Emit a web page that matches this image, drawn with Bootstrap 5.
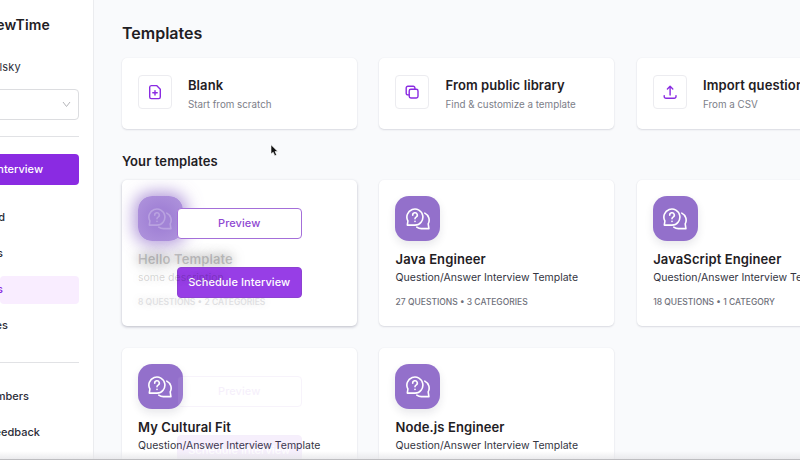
<!DOCTYPE html>
<html lang="en">
<head>
<meta charset="utf-8">
<meta name="viewport" content="width=device-width, initial-scale=1">
<title>Templates</title>
<link href="https://cdn.jsdelivr.net/npm/bootstrap@5.3.0/dist/css/bootstrap.min.css" rel="stylesheet">
<style>
body{font-family:Inter,"Liberation Sans",sans-serif;background:#f9fafc;color:#1f2024;height:460px;font-size:11px;line-height:16px}
.side{width:94px;height:460px;background:#fff;border-right:1px solid #ebecef;padding-right:14px;flex:none}
.side-line{display:flex;justify-content:flex-end;align-items:center;white-space:nowrap;flex:none;color:#2b2d38;font-weight:500}
.brand{height:20px;margin-top:15px;padding-right:29px;font-size:14px;font-weight:600;color:#1f2024;letter-spacing:.15px}
.user{height:16px;margin-top:24px;padding-right:58px;font-weight:400;letter-spacing:.2px}
.picker{height:31px;margin-top:14px;padding-right:7px;border:1px solid #dcdde0;border-radius:4px;width:90px;margin-left:-11px}
.rule{height:1px;background:#e1e2e5;flex:none}
.rule-low{margin:14px 0 20px}
.cta{height:31px;background:#8a2be2;color:#fff;border-radius:4px;margin-top:16.6px;padding:0 36px 1px 0;width:100px;margin-left:-21px}
.nav-main{margin-top:19.4px}
.nav-row{height:28px;margin-bottom:8px;border-radius:4px;padding-bottom:1px}
.nav-row.on{background:#f9edff;color:#8a2be2}
.main-area{padding:22px 0 0 28px;flex:none;width:800px}
.page-title{font-size:16px;font-weight:600;line-height:22px;margin:0 0 14px}
.sub-title{font-size:13px;font-weight:600;line-height:18px;margin:23px 0 10px;letter-spacing:.1px}
.tiles{display:grid;grid-template-columns:repeat(3,235px);column-gap:22.6px;row-gap:22px;margin-left:-.3px}
.tile{background:#fff;border:0;border-radius:5px;box-shadow:0 1px 2px rgba(30,30,60,.13),0 0 2px rgba(30,30,60,.06)}
.start{height:71px;padding:0 16px}
.icon-box{width:34px;height:34px;border:1px solid #ececf0;border-radius:4px;margin:-4px 16.2px 0 0}
.tile-name{font-size:13px;font-weight:600;line-height:18px;white-space:nowrap;letter-spacing:.1px}
.hint{color:#7c7e88;font-size:9.8px;line-height:14px;margin-top:4px;white-space:nowrap}
.template{height:146px;padding:16px}
.template.lift{box-shadow:0 1px 3px rgba(30,30,60,.28)}
.logo{width:45px;height:45px;border-radius:14px;background:#9370cb;box-shadow:0 4px 8px rgba(30,30,60,.1)}
.template .tile-name{margin-top:9px}
.template .tile-name,.desc,.meta{padding-left:.3px}
.desc{font-size:10.5px;color:#34353f;white-space:nowrap;margin-top:2px}
.meta{font-size:8.5px;line-height:12px;color:#6f717b;font-weight:500;margin-top:10px;white-space:nowrap}
.veil{position:absolute;inset:0;gap:28px}
.veil .btn{width:125px;height:31px;padding:0 0 2px;font-size:11px;font-weight:500;border-radius:4px;line-height:16px;letter-spacing:.07px}
.btn-line{background:#fff;border:1px solid #a46fd9;color:#8f48d2}
.btn-fill{background:#973ee6;border:1px solid #8d42d1;color:#fff}
.faded .logo{background:radial-gradient(#a283d6 35%,#b196dd);box-shadow:0 0 16px 4px rgba(147,112,203,.7)}
.faded .logo svg{opacity:.25}
.faded .tile-name{color:rgba(0,0,0,.2);text-shadow:0 0 12px rgba(0,0,0,.5)}
.faded .desc{color:rgba(0,0,0,.17);text-shadow:0 0 10px rgba(0,0,0,.15);position:relative;z-index:2}
.faded .meta{color:#dedee1;text-shadow:0 0 9px rgba(0,0,0,.15)}
.veil.faint{opacity:.08}
.pointer{position:absolute;left:270px;top:144px}
.edge{position:absolute;left:0;right:0;bottom:0;height:9px;background:linear-gradient(rgba(235,235,238,0),rgba(228,228,231,.75));border-bottom:1px solid #bdbdc0}
</style>
<script src="https://cdn.jsdelivr.net/npm/bootstrap@5.3.0/dist/js/bootstrap.bundle.min.js"></script>
</head>
<body class="overflow-hidden position-relative">
<svg class="d-none">
  <symbol id="chat" viewBox="0 0 24 24"><g fill="none" stroke="#fff" stroke-width="1.6" stroke-linecap="round" stroke-linejoin="round"><path d="M9 18.1H1.3L1.9 14A8 8 0 1 1 9 18.1Z"/><path d="M18.8 6.1A7.8 7.8 0 0 1 22.2 16.8L22.9 21.6H16.2A8 8 0 0 1 10.8 20.2"/><path d="M6.7 8.2A2.3 2.3 0 1 1 10.1 10.1Q9 10.7 9 11.8M9 14.3V14.4"/></g></symbol>
</svg>
<div class="d-flex overflow-hidden vh-100">
  <aside class="side d-flex flex-column overflow-hidden">
    <div class="side-line brand">InterviewTime</div>
    <div class="side-line user">Dmytro Danylsky</div>
    <div class="side-line picker"><svg width="9" height="9" viewBox="0 0 9 9" fill="none" stroke="#b5b6ba"><path d="M1 2l3.5 4.5L8 2"/></svg></div>
    <div class="rule mt-3"></div>
    <div class="side-line cta">Add Interview</div>
    <nav class="nav-main d-flex flex-column">
      <div class="side-line nav-row" style="padding-right:74px">Dashboard</div>
      <div class="side-line nav-row" style="padding-right:76px">Interviews</div>
      <div class="side-line nav-row on" style="padding-right:76px">Templates</div>
      <div class="side-line nav-row" style="padding-right:71px">Candidates</div>
    </nav>
    <div class="rule rule-low"></div>
    <nav class="d-flex flex-column">
      <div class="side-line nav-row" style="padding-right:50px">Team Members</div>
      <div class="side-line nav-row" style="padding-right:39px">Feedback</div>
    </nav>
  </aside>
  <main class="main-area">
    <h1 class="page-title">Templates</h1>
    <div class="tiles">
      <div class="tile start d-flex align-items-center">
        <div class="icon-box d-flex align-items-center justify-content-center"><svg width="16" height="16" viewBox="0 0 16 16" fill="none" stroke="#8a2be2" stroke-width="1.4" stroke-linecap="round" stroke-linejoin="round"><path d="M4.2 1.6H9.6L13.3 5.3V13A1.6 1.6 0 0 1 11.7 14.6H4.3A1.6 1.6 0 0 1 2.7 13V3.2A1.6 1.6 0 0 1 4.2 1.6ZM8 6.6V11M5.8 8.8H10.2"/></svg></div>
        <div><div class="tile-name">Blank</div><div class="hint">Start from scratch</div></div>
      </div>
      <div class="tile start d-flex align-items-center">
        <div class="icon-box d-flex align-items-center justify-content-center"><svg width="16" height="16" viewBox="0 0 16 16" fill="none" stroke="#8a2be2" stroke-width="1.4" stroke-linecap="round" stroke-linejoin="round"><rect x="5.2" y="5.2" width="8.8" height="8.8" rx="1.7"/><path d="M5.2 10.9H3.9A1.7 1.7 0 0 1 2.2 9.2V3.9A1.7 1.7 0 0 1 3.9 2.2H9.2A1.7 1.7 0 0 1 10.9 3.9V5.2"/></svg></div>
        <div><div class="tile-name">From public library</div><div class="hint">Find &amp; customize a template</div></div>
      </div>
      <div class="tile start d-flex align-items-center">
        <div class="icon-box d-flex align-items-center justify-content-center"><svg width="16" height="16" viewBox="0 0 16 16" fill="none" stroke="#8a2be2" stroke-width="1.4" stroke-linecap="round" stroke-linejoin="round"><path d="M2.2 11.6V12.4A1.8 1.8 0 0 0 4 14.2H12.2A1.8 1.8 0 0 0 14 12.4V11.6M8.1 11V2.4M5.4 4.9L8.1 2.2L10.8 4.9"/></svg></div>
        <div><div class="tile-name">Import questions</div><div class="hint">From a CSV</div></div>
      </div>
    </div>
    <h2 class="sub-title">Your templates</h2>
    <div class="tiles">
      <div class="tile template lift faded position-relative overflow-hidden">
        <div class="logo d-flex align-items-center justify-content-center"><svg width="24" height="24"><use href="#chat"/></svg></div>
        <div class="tile-name">Hello Template</div>
        <div class="desc">some description</div>
        <div class="meta">8 QUESTIONS • 2 CATEGORIES</div>
        <div class="veil d-flex flex-column align-items-center justify-content-center">
          <button class="btn btn-line">Preview</button>
          <button class="btn btn-fill">Schedule Interview</button>
        </div>
      </div>
      <div class="tile template">
        <div class="logo d-flex align-items-center justify-content-center"><svg width="24" height="24"><use href="#chat"/></svg></div>
        <div class="tile-name">Java Engineer</div>
        <div class="desc">Question/Answer Interview Template</div>
        <div class="meta">27 QUESTIONS • 3 CATEGORIES</div>
      </div>
      <div class="tile template">
        <div class="logo d-flex align-items-center justify-content-center"><svg width="24" height="24"><use href="#chat"/></svg></div>
        <div class="tile-name">JavaScript Engineer</div>
        <div class="desc">Question/Answer Interview Template</div>
        <div class="meta">18 QUESTIONS • 1 CATEGORY</div>
      </div>
      <div class="tile template position-relative">
        <div class="logo d-flex align-items-center justify-content-center"><svg width="24" height="24"><use href="#chat"/></svg></div>
        <div class="tile-name">My Cultural Fit</div>
        <div class="desc">Question/Answer Interview Template</div>
        <div class="veil faint d-flex flex-column align-items-center justify-content-center">
          <button class="btn btn-line">Preview</button>
          <button class="btn btn-fill">Schedule Interview</button>
        </div>
      </div>
      <div class="tile template">
        <div class="logo d-flex align-items-center justify-content-center"><svg width="24" height="24"><use href="#chat"/></svg></div>
        <div class="tile-name">Node.js Engineer</div>
        <div class="desc">Question/Answer Interview Template</div>
      </div>
    </div>
  </main>
</div>
<svg class="pointer" width="9" height="13" viewBox="0 0 9 13"><path d="M1 .8V10L3.2 8.2L4.8 11.8L6.6 11L5 7.5H7.8Z" fill="#111" stroke="#fff" stroke-width=".6"/></svg>
<div class="edge"></div>
</body>
</html>
